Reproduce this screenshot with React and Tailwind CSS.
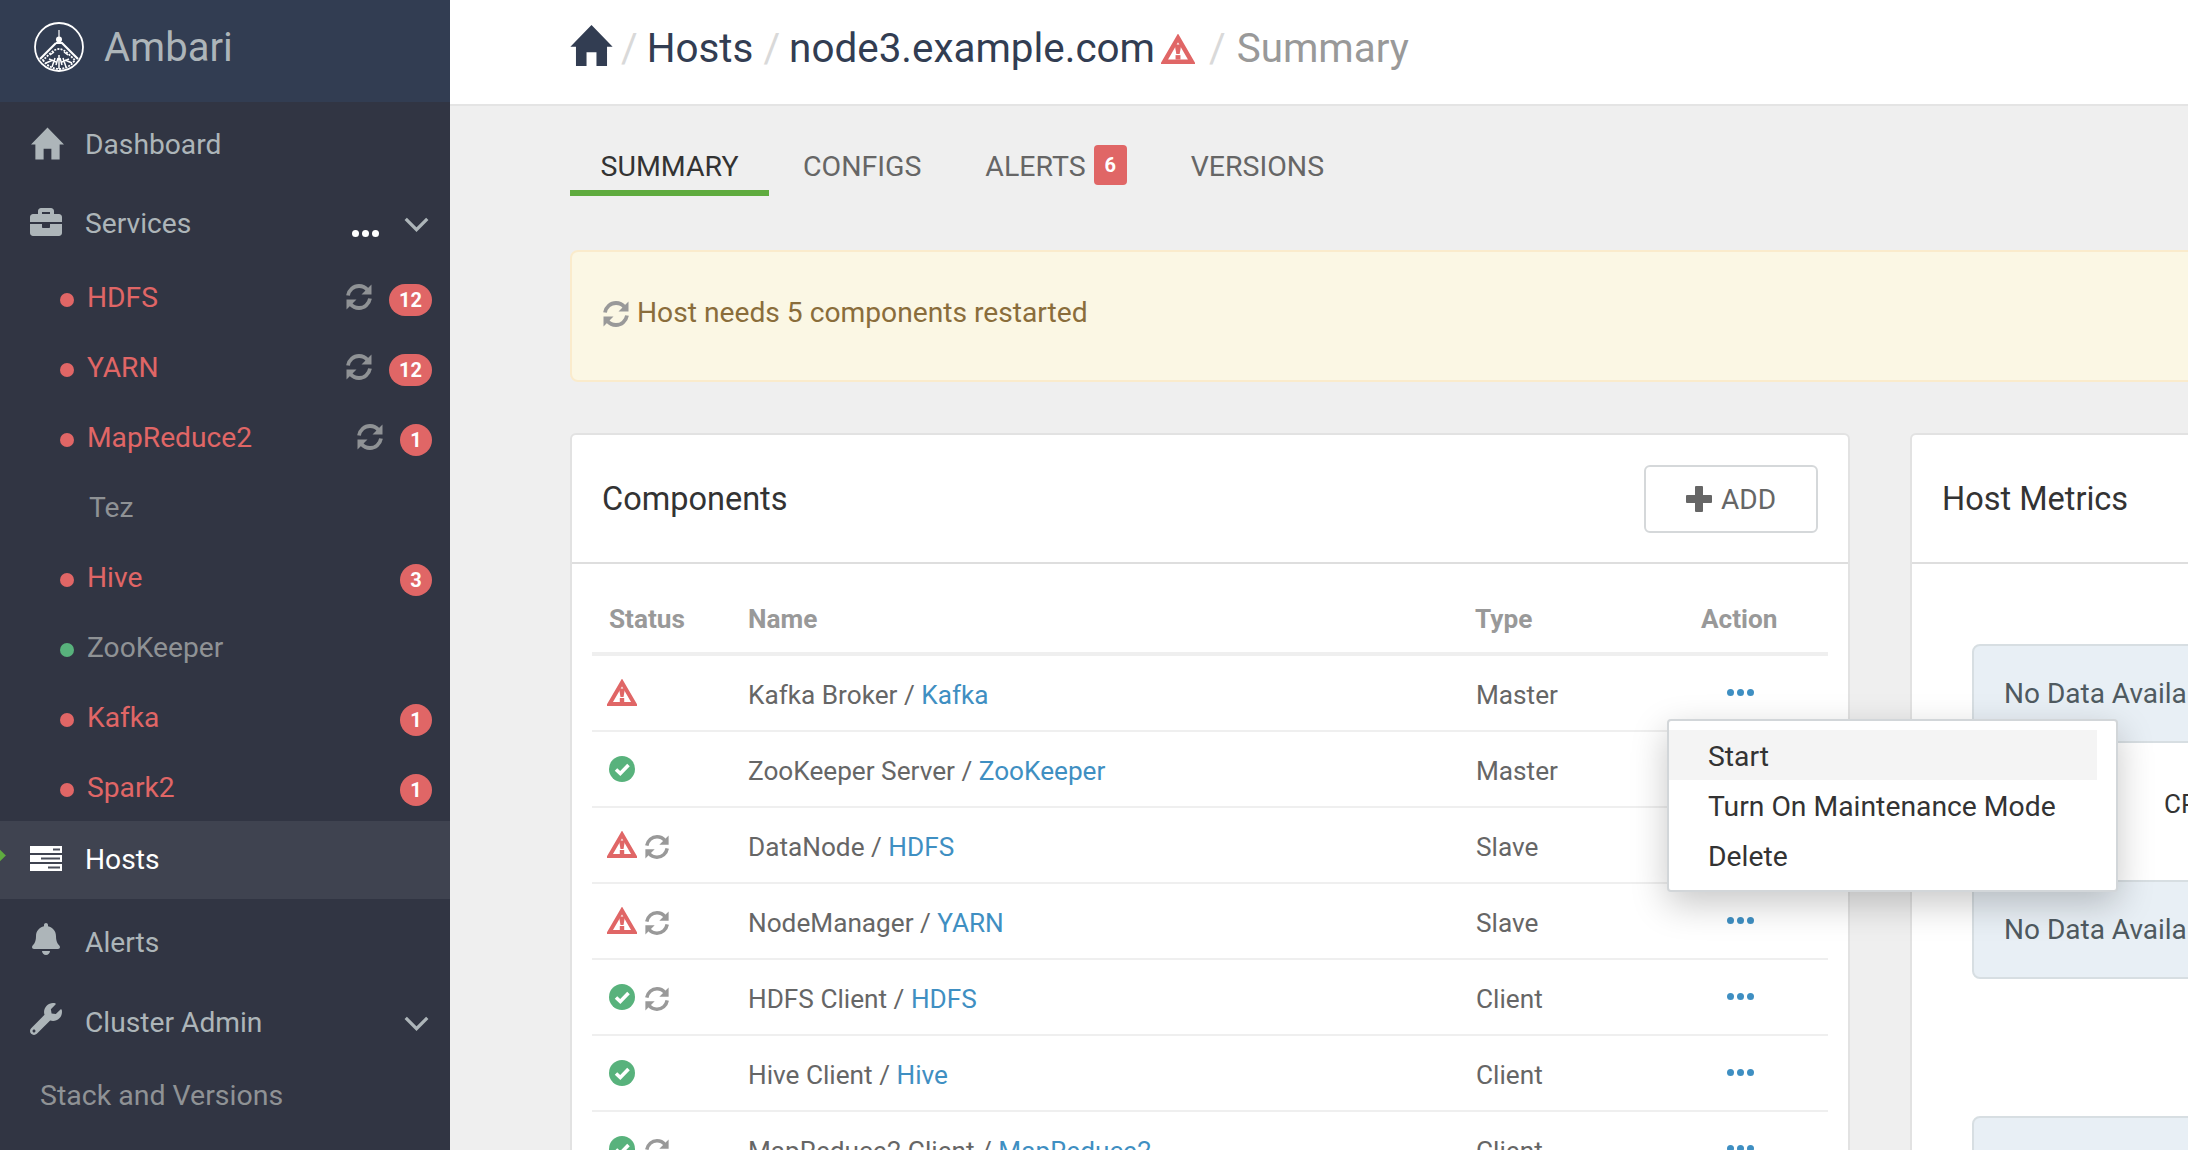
import { FaBell, FaBriefcase, FaWrench } from 'react-icons/fa';

const font = { fontFamily: 'Roboto, sans-serif' };

function HomeIcon({ className }) {
  return (
    <svg viewBox="0 0 34 33" className={className} fill="currentColor">
      <path d="M17 0 34 17.500H29.500V33H21V22H13V33H4.500V17.500H0Z" />
    </svg>
  );
}

function RefreshIcon({ className }) {
  return (
    <svg viewBox="0 0 28 28" className={className} fill="none" stroke="currentColor">
      <path d="M3 12.500C4 7 8.500 3 14 3c3.500 0 6.500 1.500 8.500 4" strokeWidth="3.800" />
      <path d="M25 15.500C24 21 19.500 25 14 25c-3.500 0-6.500-1.500-8.500-4" strokeWidth="3.800" />
      <path d="M26.500 1.500V11.500H16.500Z" fill="currentColor" stroke="none" />
      <path d="M1.500 26.500V16.500H11.500Z" fill="currentColor" stroke="none" />
    </svg>
  );
}

function WarnIcon({ className }) {
  return (
    <svg viewBox="0 0 30 27" className={className}>
      <path d="M15 3.500 27.500 25H2.500Z" fill="none" stroke="#e06666" strokeWidth="4" />
      <path d="M12 9.500H18L16.500 18H13.500Z" fill="#e06666" />
      <rect x="12.800" y="19" width="4.400" height="4" fill="#e06666" />
    </svg>
  );
}

function CheckIcon({ className }) {
  return (
    <svg viewBox="0 0 26 26" className={className}>
      <circle cx="13" cy="13" r="13" fill="#58b27c" />
      <path d="M7 13.500 11.300 17.500 19.500 9" fill="none" stroke="#fff" strokeWidth="3.600" />
    </svg>
  );
}

function HostsIcon({ className }) {
  return (
    <svg viewBox="0 0 32 25" className={className}>
      <path d="M0 0H32V7H0ZM0 9H32V16H0ZM0 18H32V25H0Z" fill="#fff" />
      <path d="M23 2.500H30V4.500H23ZM11 11.500H30V13.500H11ZM18 20.500H30V22.500H18Z" fill="#4a4e5a" />
    </svg>
  );
}

function Logo({ className }) {
  return (
    <svg viewBox="0 0 50 50" className={className} fill="none" stroke="#fff">
      <circle cx="25" cy="25" r="24" strokeWidth="1.800" />
      <path d="M25 8V16" strokeWidth="1.200" />
      <circle cx="25" cy="17.500" r="3" fill="#fff" stroke="none" />
      <path d="M22 21H28L44 37" strokeWidth="2.200" />
      <path d="M22 21 6 37" strokeWidth="2.200" />
      <path d="M9 38C13 44 19 47 25 47S37 44 41 38C36 34 31 27 25 27S14 34 9 38Z" strokeWidth="1.800" strokeDasharray="2 1.200" />
      <path d="M25 47V33M18 45 21 36M32 45 29 36M12 41 19 38M38 41 31 38M16 33 20 30M34 33 30 30M22 43 24 36M28 43 26 36M15 37 22 40M35 37 28 40" strokeWidth="1.500" />
    </svg>
  );
}

function Dots({ className }) {
  return (
    <span className={`flex gap-[3px] ${className}`}>
      <i className="w-[7px] h-[7px] rounded-full bg-current" />
      <i className="w-[7px] h-[7px] rounded-full bg-current" />
      <i className="w-[7px] h-[7px] rounded-full bg-current" />
    </span>
  );
}

function Chevron({ className }) {
  return (
    <svg viewBox="0 0 26 16" className={className} fill="none" stroke="#adb5b9" strokeWidth="3.500">
      <path d="M1.500 2 13 13.500 24.500 2" />
    </svg>
  );
}

const services = [
  { name: 'HDFS', state: 'bad', restart: true, count: 12 },
  { name: 'YARN', state: 'bad', restart: true, count: 12 },
  { name: 'MapReduce2', state: 'bad', restart: true, count: 1 },
  { name: 'Tez' },
  { name: 'Hive', state: 'bad', count: 3 },
  { name: 'ZooKeeper', state: 'ok' },
  { name: 'Kafka', state: 'bad', count: 1 },
  { name: 'Spark2', state: 'bad', count: 1 },
];

const components = [
  { status: 'warn', name: 'Kafka Broker', service: 'Kafka', type: 'Master' },
  { status: 'ok', name: 'ZooKeeper Server', service: 'ZooKeeper', type: 'Master' },
  { status: 'warn', restart: true, name: 'DataNode', service: 'HDFS', type: 'Slave' },
  { status: 'warn', restart: true, name: 'NodeManager', service: 'YARN', type: 'Slave' },
  { status: 'ok', restart: true, name: 'HDFS Client', service: 'HDFS', type: 'Client' },
  { status: 'ok', name: 'Hive Client', service: 'Hive', type: 'Client' },
  { status: 'ok', restart: true, name: 'MapReduce2 Client', service: 'MapReduce2', type: 'Client' },
];

function Sidebar() {
  return (
    <aside className="w-[450px] shrink-0 bg-[#313543] text-[#adb5b9] text-[28.200px]">
      <div className="h-[102px] bg-[#323d52] flex items-center pl-[34px]">
        <Logo className="w-[50px] h-[50px] mr-[20px] mb-[8px]" />
        <span className="text-[40px] leading-none mb-[6px]">Ambari</span>
      </div>
      <div className="h-[84px] flex items-center pl-[31px] pt-[2px]">
        <HomeIcon className="w-[33px] h-[33px] mr-[21px] mb-[4px]" />
        Dashboard
      </div>
      <div className="h-[76px] flex items-center pl-[30px] pr-[21px] pt-[1px]">
        <FaBriefcase className="w-[32px] h-[32px] mr-[23px] mb-[5px]" />
        <span>Services</span>
        <Dots className="ml-auto mr-[25px] mt-[17px] text-white" />
        <Chevron className="w-[25px] h-[15px]" />
      </div>
      <div className="pt-[3px]">
        {services.map(s => (
          <div key={s.name} className={`h-[70px] flex items-center pl-[60px] pr-[18px] ${s.state === 'bad' ? 'text-[#e06666]' : 'text-[#8f9295]'}`}>
            <span className={`w-[14px] h-[14px] rounded-full mr-[13px] ${s.state === 'bad' ? 'bg-[#e06666]' : s.state === 'ok' ? 'bg-[#58b27c]' : 'bg-transparent'}`} />
            <span className={`-mt-[3px] ${s.state ? '' : 'ml-[2px]'}`}>{s.name}</span>
            {s.restart && <RefreshIcon className="w-[28px] h-[28px] ml-auto mb-[7px] text-[#8f9295]" />}
            {s.count && (
              <span className={`${s.restart ? 'ml-[16px]' : 'ml-auto'} h-[32px] rounded-full bg-[#e06666] text-white text-[20px] font-bold flex items-center justify-center ${s.count > 9 ? 'w-[43px]' : 'w-[32px]'}`}>
                {s.count}
              </span>
            )}
          </div>
        ))}
      </div>
      <div className="relative h-[78px] mt-[-4px] bg-[#3f4350] text-white flex items-center pl-[30px]">
        <i className="absolute left-[-5px] top-[30px] w-[9px] h-[9px] rotate-45 bg-[#5fab3f]" />
        <HostsIcon className="w-[32px] h-[25px] mr-[23px] mb-[3px]" />
        Hosts
      </div>
      <div className="h-[84px] flex items-center pl-[32px] pt-[4px]">
        <FaBell className="w-[28px] h-[32px] mr-[25px] mb-[8px]" />
        Alerts
      </div>
      <div className="h-[76px] flex items-center pl-[30px] pr-[21px] pt-[4px]">
        <FaWrench className="w-[32px] h-[32px] mr-[23px] mb-[8px]" />
        <span>Cluster Admin</span>
        <Chevron className="w-[25px] h-[15px] ml-auto" />
      </div>
      <div className="pl-[40px] pt-[16px] text-[28.500px] text-[#8f9295]">Stack and Versions</div>
    </aside>
  );
}

function Breadcrumb() {
  return (
    <div className="h-[106px] shrink-0 bg-white border-b-2 border-[#e4e4e4] flex items-center pl-[120px] pb-[6px] text-[40.400px] text-[#323d52]">
      <HomeIcon className="w-[43px] h-[41px] mb-[7px]" />
      <span className="text-[#d9d9d9] ml-[8px]">/</span>
      <span className="ml-[9px]">Hosts</span>
      <span className="text-[#d9d9d9] ml-[10px]">/</span>
      <span className="ml-[9px]">node3.example.com</span>
      <WarnIcon className="w-[34px] h-[30px] ml-[6px]" />
      <span className="text-[#d9d9d9] ml-[14px]">/</span>
      <span className="ml-[11px] text-[#999]">Summary</span>
    </div>
  );
}

function Tabs() {
  return (
    <div className="flex h-[90px] pt-[40px] text-[28.500px] text-[#666] leading-none">
      <div className="w-[199px] h-[50px] border-b-[6px] border-[#5fab3f] text-[#333] flex justify-center pt-[7px]">SUMMARY</div>
      <div className="ml-[34px] pt-[7px]">CONFIGS</div>
      <div className="ml-[64px] pt-[7px]">ALERTS</div>
      <div className="ml-[8px] w-[33px] h-[40px] mt-[-1px] rounded-[4px] bg-[#e06666] text-white text-[20px] font-bold flex items-center justify-center">6</div>
      <div className="ml-[64px] pt-[7px]">VERSIONS</div>
    </div>
  );
}

function ComponentsCard() {
  return (
    <div className="w-[1280px] shrink-0 h-[800px] bg-white border-2 border-[#e2e2e2] rounded-[6px]">
      <div className="h-[129px] border-b-2 border-[#dedede] flex items-center justify-between pl-[30px] pr-[30px]">
        <span className="pt-[2px] text-[32.500px] text-[#333]">Components</span>
        <span className="w-[174px] h-[68px] border-2 border-[#d5d8da] rounded-[6px] flex items-center justify-center text-[28px] text-[#666]">
          <span className="text-[#666] w-[26px] h-[26px] mr-[9px] relative">
            <i className="absolute left-0 right-0 top-[9px] h-[8px] bg-current rounded-[1px]" />
            <i className="absolute top-0 bottom-0 left-[9px] w-[8px] bg-current rounded-[1px]" />
          </span>
          <span className="pt-[2px]">ADD</span>
        </span>
      </div>
      <div className="mx-[20px] text-[26.200px] text-[#666]">
        <div className="h-[92px] border-b-[4px] border-[#efefef] flex items-center font-bold text-[#999] pt-[23px]">
          <span className="w-[156px] pl-[17px]">Status</span>
          <span className="w-[727px]">Name</span>
          <span className="w-[226px]">Type</span>
          <span>Action</span>
        </div>
        {components.map(c => (
          <div key={c.name} className="h-[76px] border-b-2 border-[#efefef] flex items-center pt-[5px]">
            <span className="w-[156px] pl-[15px] flex items-center">
              {c.status === 'warn'
                ? <WarnIcon className="w-[30px] h-[27px] mb-[6px]" />
                : <CheckIcon className="w-[26px] h-[26px] ml-[2px] mr-[2px] mb-[6px]" />}
              {c.restart && <RefreshIcon className="w-[26px] h-[26px] ml-[7px] mb-[2px] text-[#999]" />}
            </span>
            <span className="w-[728px]">
              {c.name} / <span className="text-[#3f8fc2]">{c.service}</span>
            </span>
            <span className="w-[225px]">{c.type}</span>
            <span className="w-[100px] flex justify-center pr-[22px]">
              <Dots className="text-[#3f8fc2] mb-[6px]" />
            </span>
          </div>
        ))}
      </div>
    </div>
  );
}

function NoData() {
  return (
    <div className="h-[99px] w-[800px] ml-[60px] bg-[#e8eff5] border-2 border-[#d7dee2] rounded-[8px] flex items-center pl-[30px] text-[28px] text-[#4f5a60]">
      No Data Available
    </div>
  );
}

function MetricsCard() {
  return (
    <div className="w-[1000px] shrink-0 h-[800px] bg-white border-2 border-[#e2e2e2] rounded-[6px]">
      <div className="h-[129px] border-b-2 border-[#dedede] flex items-center pl-[30px] text-[32.500px] text-[#333]">
        <span className="pt-[2px]">Host Metrics</span>
      </div>
      <div className="pt-[80px]">
        <NoData />
        <div className="h-[137px] pl-[252px] pt-[43px] text-[26px] leading-[36px] text-[#333]">CPU Usage</div>
        <NoData />
        <div className="h-[137px]" />
        <NoData />
      </div>
    </div>
  );
}

function ActionMenu() {
  return (
    <div className="absolute left-[1217px] top-[719px] w-[451px] h-[173px] bg-white border-2 border-[#d2d6d9] rounded-[4px] shadow-[0_12px_36px_rgba(0,0,0,0.22)] pt-[9px] text-[28.300px] text-[#333]">
      <div className="h-[50px] w-[428px] bg-[#f4f4f4] pl-[39px] pt-[4px] flex items-center">Start</div>
      <div className="h-[50px] pl-[39px] pt-[4px] flex items-center">Turn On Maintenance Mode</div>
      <div className="h-[50px] pl-[39px] pt-[4px] flex items-center">Delete</div>
    </div>
  );
}

export default function App() {
  return (
    <div className="w-[2188px] h-[1150px] flex overflow-hidden" style={font}>
      <Sidebar />
      <main className="relative flex-1 min-w-0 bg-[#efefef] flex flex-col overflow-hidden">
        <Breadcrumb />
        <div className="pl-[120px]">
          <Tabs />
          <div className="w-[1900px] h-[132px] mt-[54px] bg-[#fbf7e4] border-2 border-[#faebcc] rounded-[8px] flex items-center pl-[30px] pb-[5px] text-[28.200px] text-[#8a6d3b]">
            <RefreshIcon className="w-[28px] h-[28px] mr-[7px] text-[#999]" />
            Host needs 5 components restarted
          </div>
          <div className="flex gap-[60px] mt-[51px]">
            <ComponentsCard />
            <MetricsCard />
          </div>
        </div>
        <ActionMenu />
      </main>
    </div>
  );
}
